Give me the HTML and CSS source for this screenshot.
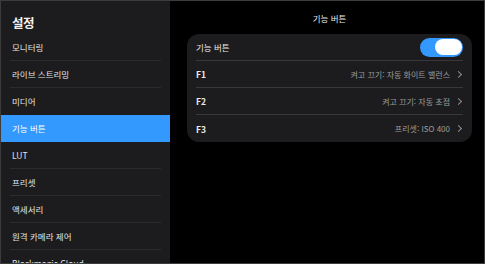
FILE: index.html
```html
<!DOCTYPE html>
<html lang="ko">
<head>
  <meta charset="UTF-8">
  <meta name="viewport" content="width=device-width, initial-scale=1.0">
  <title>설정</title>
  <link rel="stylesheet" href="styles.css">
</head>
<body>
<div class="screen">
  <!-- 왼쪽 메뉴 -->
  <div class="sidebar">
    <h1 class="sidebar-title">설정</h1>
    <ul class="menu">
      <li class="menu-item">모니터링</li>
      <li class="menu-item">라이브 스트리밍</li>
      <li class="menu-item">미디어</li>
      <li class="menu-item active">기능 버튼</li>
      <li class="menu-item">LUT</li>
      <li class="menu-item">프리셋</li>
      <li class="menu-item">액세서리</li>
      <li class="menu-item">원격 카메라 제어</li>
      <li class="menu-item">Blackmagic Cloud</li>
    </ul>
  </div>

  <!-- 오른쪽 내용 -->
  <div class="content">
    <div class="content-title">기능 버튼</div>
    <div class="card">
      <div class="row">
        <span class="row-label">기능 버튼</span>
        <span class="toggle on"><span class="knob"></span></span>
      </div>
      <div class="row">
        <span class="row-label key">F1</span>
        <span class="row-value">켜고 끄기: 자동 화이트 밸런스</span>
        <span class="chevron"></span>
      </div>
      <div class="row">
        <span class="row-label key">F2</span>
        <span class="row-value">켜고 끄기: 자동 초점</span>
        <span class="chevron"></span>
      </div>
      <div class="row">
        <span class="row-label key">F3</span>
        <span class="row-value">프리셋: ISO 400</span>
        <span class="chevron"></span>
      </div>
    </div>
  </div>
</div>
</body>
</html>
```

FILE: styles.css
```css
body {
  margin: 0;
  background-color: #000;
  font-family: "Noto Sans CJK KR", "Noto Sans", sans-serif;
  color: #e8e8e8;
}
.screen {
  width: 485px;
  height: 264px;
  box-sizing: border-box;
  border: 1px solid #3c3c3c;
  display: flex;
  overflow: hidden;
  background-color: #000;
}
.sidebar {
  width: 169px;
  flex-shrink: 0;
  background-color: #1c1c1e;
  overflow: hidden;
}
.sidebar-title {
  margin: 0;
  padding: 13px 0 0 11px;
  height: 33px;
  box-sizing: border-box;
  font-size: 12.5px;
  font-weight: bold;
  line-height: 17px;
  letter-spacing: -0.5px;
  color: #f2f2f2;
}
.menu {
  list-style: none;
  margin: 0;
  padding: 0;
}
.menu-item {
  height: 27px;
  line-height: 27px;
  padding-left: 11px;
  font-size: 8.5px;
  color: #e4e4e4;
  position: relative;
}
/* 항목 사이 구분선 */
.menu-item::after {
  content: "";
  position: absolute;
  left: 9px;
  right: 9px;
  bottom: 0;
  height: 1px;
  background-color: #2c2c2e;
}
.menu-item.active {
  background-color: #3399ff;
  color: #fff;
}
.menu-item.active::after,
.menu-item:nth-child(3)::after {
  display: none;
}
.content {
  flex: 1;
  padding: 0 12px 0 17px;
}
.content-title {
  height: 33px;
  line-height: 34px;
  text-align: center;
  font-size: 8.5px;
  color: #e8e8e8;
}
.card {
  background-color: #1c1c1e;
  border-radius: 12px;
  padding: 0 9px;
}
.row {
  height: 27px;
  display: flex;
  align-items: center;
  border-bottom: 1px solid #38383a;
  box-sizing: border-box;
}
.row:last-child {
  border-bottom: none;
}
.row-label {
  font-size: 8.5px;
  color: #eaeaea;
  flex: 1;
}
.row-label.key {
  font-weight: bold;
}
.row-value {
  font-size: 8px;
  color: #9c9c9c;
}
.chevron {
  width: 4px;
  height: 4px;
  border-top: 1px solid #8e8e8e;
  border-right: 1px solid #8e8e8e;
  transform: rotate(45deg);
  margin: 0 2px 0 6px;
}
.toggle {
  width: 43px;
  height: 19px;
  border-radius: 10px;
  background-color: #3399ff;
  display: flex;
  align-items: center;
  justify-content: flex-end;
  padding: 0 1px;
  box-sizing: border-box;
}
.knob {
  width: 27px;
  height: 16px;
  border-radius: 8px;
  background-color: #fff;
}
```
